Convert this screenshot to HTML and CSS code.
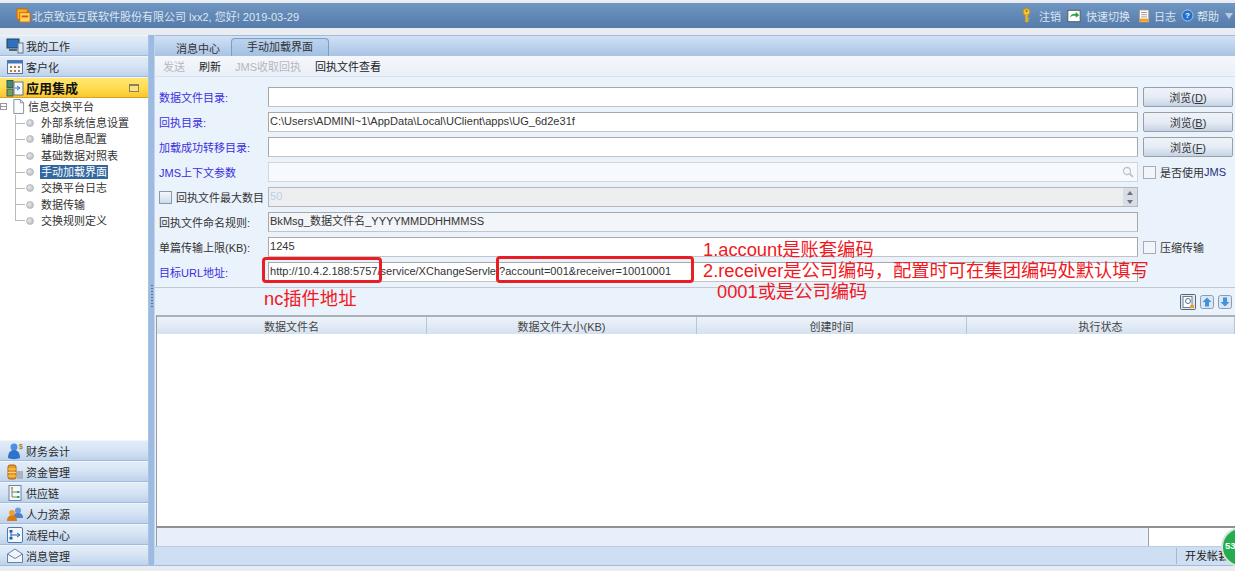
FILE: index.html
```html
<!DOCTYPE html>
<html lang="zh">
<head>
<meta charset="utf-8">
<title>手动加载界面</title>
<link rel="stylesheet" href="styles.css">
</head>
<body>
<div class="app">
  <header class="topbar">
    <div class="brand">
      <svg class="ico16" viewBox="0 0 16 16"><rect x="1" y="1" width="11" height="11" fill="#f6b01e" stroke="#c9660c"/><rect x="4" y="5" width="11" height="10" fill="#ffd65a" stroke="#d8640c"/><rect x="6" y="8" width="7" height="2" fill="#e2520c"/></svg>
      <span>北京致远互联软件股份有限公司 lxx2, 您好! 2019-03-29</span>
    </div>
    <nav class="toplinks">
      <svg class="ico-key" viewBox="0 0 10 16"><circle cx="5" cy="4" r="3.800" fill="#f7c531" stroke="#c98a10"/><circle cx="5" cy="3" r="1" fill="#8a6a10"/><rect x="3.700" y="7" width="2.600" height="8.500" fill="#f0b020"/><rect x="6" y="10.500" width="2" height="1.500" fill="#f0b020"/><rect x="6" y="13" width="1.500" height="1.500" fill="#f0b020"/></svg>
      <span class="tl-text tl-logout">注销</span>
      <svg class="ico-switch" viewBox="0 0 16 16"><rect x="1" y="1.500" width="14" height="13" fill="#fff" stroke="#555"/><path d="M3 10 C4 6 7 5 10 5.500 L10 3 L14 7 L10 10 L10 8 C7 7.500 5 8 3 10Z" fill="#2aa64a"/></svg>
      <span class="tl-text tl-switch">快速切换</span>
      <svg class="ico-log" viewBox="0 0 13 16"><rect x=".5" y="1" width="11" height="14" fill="#fff" stroke="#888"/><path d="M2.500 4h7M2.500 6.500h7M2.500 9h7" stroke="#a88" stroke-width="1"/><rect x="1" y="11" width="10" height="3.500" fill="#f0a020"/></svg>
      <span class="tl-text tl-log">日志</span>
      <svg class="ico-help" viewBox="0 0 16 16"><circle cx="8" cy="8" r="6.800" fill="#1f70c8" stroke="#bcd8f2"/><text x="8" y="11.500" class="qmark">?</text></svg>
      <span class="tl-text tl-help">帮助</span>
      <span class="caret"></span>
    </nav>
  </header>

  <div class="workspace">
    <aside class="sidebar">
      <div class="acc"><svg class="ico18" viewBox="0 0 18 18"><rect x="1" y="2" width="12" height="9" fill="#2f6fc4" stroke="#244"/><rect x="3" y="12" width="8" height="2" fill="#567"/><rect x="12" y="6" width="5" height="10" fill="#dde6f2" stroke="#678"/></svg><span>我的工作</span></div>
      <div class="acc"><svg class="ico18" viewBox="0 0 18 18"><rect x="1.500" y="2.500" width="15" height="13" fill="#f4f6fa" stroke="#5578a8"/><rect x="2" y="3" width="14" height="2.500" fill="#3d78c0"/><path d="M4 8h2v2H4zM8 8h2v2H8zM12 8h2v2h-2zM4 12h2v2H4zM8 12h2v2H8zM12 12h2v2h-2z" fill="#b5794a"/></svg><span>客户化</span></div>
      <div class="acc acc-on"><svg class="ico18" viewBox="0 0 18 18"><rect x="1" y="1.500" width="6" height="7" fill="#3d8f6a" stroke="#456"/><rect x="1" y="10" width="6" height="7" fill="#6aa65a" stroke="#456"/><rect x="8" y="3" width="9" height="13" fill="#f4f6fa" stroke="#678"/><path d="M9 9h4M11 7l3 2-3 2" stroke="#2f6fc4" fill="none"/></svg><span>应用集成</span><i class="collapse"></i></div>
      <div class="tree">
        <div class="tree-root"><span class="expander"></span><svg class="ico14" viewBox="0 0 14 16"><path d="M2 .5h7l3.500 3.500v11.500H2z" fill="#fbfcfe" stroke="#7d8ba0"/><path d="M9 .5V4h3.500" fill="none" stroke="#7d8ba0"/></svg><span>信息交换平台</span></div>
        <ul class="tree-list">
          <li><i class="dot"></i><span>外部系统信息设置</span></li>
          <li><i class="dot"></i><span>辅助信息配置</span></li>
          <li><i class="dot"></i><span>基础数据对照表</span></li>
          <li><i class="dot"></i><span class="sel">手动加载界面</span></li>
          <li><i class="dot"></i><span>交换平台日志</span></li>
          <li><i class="dot"></i><span>数据传输</span></li>
          <li><i class="dot"></i><span>交换规则定义</span></li>
        </ul>
      </div>
      <div class="acc-group">
        <div class="acc"><svg class="ico18" viewBox="0 0 18 18"><circle cx="8" cy="5" r="3.500" fill="#4d8fe0"/><path d="M2 16c0-6 3-8 6-8s6 2 6 8c-3 1.500-9 1.500-12 0z" fill="#2f72cc"/><text x="13" y="7" class="dollar">$</text></svg><span>财务会计</span></div>
        <div class="acc"><svg class="ico18" viewBox="0 0 18 18"><rect x="2" y="2" width="8" height="14" rx="2" fill="#e8992a" stroke="#a8640c"/><path d="M2 6h8M2 9.500h8M2 13h8" stroke="#fbd27a"/><rect x="11" y="8" width="6" height="8" fill="#a9b2bd"/></svg><span>资金管理</span></div>
        <div class="acc"><svg class="ico18" viewBox="0 0 18 18"><rect x="3" y="1.500" width="12" height="15" fill="#f4f7fb" stroke="#6a86a8"/><path d="M6 4v9h6M6 8h6" stroke="#6a8a5a" fill="none"/><rect x="5" y="3" width="2" height="2" fill="#d8a030"/><rect x="11" y="7" width="2.500" height="2" fill="#3a9a6a"/><rect x="11" y="12" width="2.500" height="2" fill="#3a9a6a"/></svg><span>供应链</span></div>
        <div class="acc"><svg class="ico18" viewBox="0 0 18 18"><circle cx="12" cy="5.500" r="3" fill="#6a9ad8"/><path d="M7 13c0-4 2-5 5-5s5 1 5 5z" fill="#4d80c8"/><circle cx="6" cy="8" r="3" fill="#f0a030"/><path d="M1 16c0-4 2-5.500 5-5.500S11 12 11 16z" fill="#d87a18"/></svg><span>人力资源</span></div>
        <div class="acc"><svg class="ico18" viewBox="0 0 18 18"><rect x="1.500" y="1.500" width="15" height="15" rx="1.500" fill="#f4f8fd" stroke="#4a78b0"/><path d="M5 5v7M5 9h8M11 7l3 2-3 2" stroke="#1f5fb0" fill="none"/><rect x="3.500" y="4" width="3" height="2.500" fill="#1f5fb0"/><rect x="3.500" y="11" width="3" height="2.500" fill="#1f5fb0"/></svg><span>流程中心</span></div>
        <div class="acc"><svg class="ico18" viewBox="0 0 18 18"><path d="M1.500 7 9 2l7.500 5v8.500h-15z" fill="#f2f6fb" stroke="#5f83ad"/><path d="M1.500 7 9 11.500 16.500 7" fill="none" stroke="#5f83ad"/></svg><span>消息管理</span></div>
      </div>
    </aside>

    <div class="splitter"><span class="grip"></span></div>

    <main class="content">
      <div class="tabs">
        <span class="tab">消息中心</span>
        <span class="tab tab-on">手动加载界面</span>
      </div>
      <div class="actions">
        <span class="off">发送</span>
        <span>刷新</span>
        <span class="off">JMS收取回执</span>
        <span>回执文件查看</span>
      </div>

      <form class="form">
        <label class="lbl blue">数据文件目录:</label>
        <div class="field"></div>
        <button type="button" class="btn">浏览(<u>D</u>)</button>

        <label class="lbl blue">回执目录:</label>
        <div class="field">C:\Users\ADMINI~1\AppData\Local\UClient\apps\UG_6d2e31f</div>
        <button type="button" class="btn">浏览(<u>B</u>)</button>

        <label class="lbl blue">加载成功转移目录:</label>
        <div class="field"></div>
        <button type="button" class="btn">浏览(<u>F</u>)</button>

        <label class="lbl blue">JMS上下文参数</label>
        <div class="field field-off"><svg class="search" viewBox="0 0 12 12"><circle cx="5" cy="5" r="3.500" fill="none" stroke="#bfc4ca" stroke-width="1.300"/><path d="M7.500 7.500 11 11" stroke="#bfc4ca" stroke-width="1.800"/></svg></div>
        <label class="chk"><i class="box"></i>是否使用<span class="navy">JMS</span></label>

        <label class="lbl"><i class="box box-fill"></i>回执文件最大数目</label>
        <div class="field field-gray">50<span class="spin"><b class="up"></b><b class="down"></b></span></div>
        <span></span>

        <label class="lbl">回执文件命名规则:</label>
        <div class="field field-soft">BkMsg_数据文件名_YYYYMMDDHHMMSS</div>
        <span></span>

        <label class="lbl">单篇传输上限(KB):</label>
        <div class="field">1245</div>
        <label class="chk"><i class="box"></i>压缩传输</label>

        <label class="lbl blue">目标URL地址:</label>
        <div class="field">http://10.4.2.188:5757/service/XChangeServlet?account=001&amp;receiver=10010001</div>
        <span></span>
      </form>

      <div class="gridbar">
        <svg class="tool tool-big" viewBox="0 0 16 16"><rect x=".5" y=".5" width="15" height="15" rx="1" fill="#dfe8f3" stroke="#56657a"/><rect x="3" y="2.500" width="9" height="11" fill="#fff" stroke="#6a7a90"/><circle cx="8" cy="7" r="2.500" fill="none" stroke="#55708f"/><rect x="10" y="11" width="4" height="3" fill="#e8a030"/></svg>
        <svg class="tool" viewBox="0 0 14 14"><rect x=".5" y=".5" width="13" height="13" rx="2" fill="#dbe7f4" stroke="#8a9cb2"/><path d="M7 2.500 11.500 7H9v4.500H5V7H2.500z" fill="#3f94dc"/></svg>
        <svg class="tool" viewBox="0 0 14 14"><rect x=".5" y=".5" width="13" height="13" rx="2" fill="#dbe7f4" stroke="#8a9cb2"/><path d="M7 11.500 2.500 7H5V2.500h4V7h2.500z" fill="#3f94dc"/></svg>
      </div>

      <div class="grid">
        <div class="grid-head">
          <span>数据文件名</span>
          <span>数据文件大小(KB)</span>
          <span>创建时间</span>
          <span>执行状态</span>
        </div>
        <div class="grid-body"></div>
      </div>

      <div class="status">
        <div class="status-main"></div>
        <div class="status-side"></div>
      </div>
      <div class="footer"><span class="acct">开发帐套</span></div>
    </main>
  </div>
</div>

<div class="redbox redbox-a"></div>
<div class="redbox redbox-b"></div>
<div class="note note-1">1.account是账套编码</div>
<div class="note note-2">2.receiver是公司编码，配置时可在集团编码处默认填写</div>
<div class="note note-3">0001或是公司编码</div>
<div class="note note-4">nc插件地址</div>
<div class="badge">53</div>
</body>
</html>
```
FILE: styles.css
```css
* { box-sizing: border-box; }
html, body { margin: 0; height: 100%; overflow: hidden; }
body {
  background: #e9edf2;
  font-family: "Liberation Sans", "Noto Sans CJK SC", sans-serif;
  font-size: 11px;
  color: #333;
}
.app { width: 1235px; height: 571px; padding-top: 3px; display: flex; flex-direction: column; }

.topbar {
  height: 25px;
  flex: none;
  display: flex;
  justify-content: space-between;
  align-items: center;
  padding: 0 2px 0 16px;
  color: #dde5f0;
  background: linear-gradient(#7096c2, #5f85b4 60%, #557ba9);
}
.brand { display: flex; align-items: center; gap: 1px; }
.toplinks { display: flex; align-items: center; }
.tl-logout { margin: 0 6px 0 8px; }
.tl-switch { margin: 0 8px 0 5px; }
.tl-log { margin: 0 5px 0 3px; }
.tl-help { margin: 0 6px 0 3px; }
.caret { width: 0; height: 0; margin-top: 1px; border: 4px solid transparent; border-top: 6px solid #b8cbe2; border-bottom: 0; }
.ico16 { width: 15px; height: 15px; flex: none; }
.ico-key { width: 9px; height: 15px; flex: none; }
.ico-switch { width: 14px; height: 14px; flex: none; }
.ico-log { width: 13px; height: 14px; flex: none; }
.ico-help { width: 13px; height: 13px; flex: none; }
.qmark { font: bold 10px "Liberation Sans", sans-serif; fill: #fff; text-anchor: middle; }
.dollar { font: bold 7px "Liberation Sans", sans-serif; fill: #b5781a; }

.workspace { flex: 1; min-height: 0; display: flex; margin-top: 7px; margin-bottom: 5px; }

.sidebar { width: 149px; flex: none; display: flex; flex-direction: column; background: #fff; border-right: 1px solid #a9c2e0; }
.acc {
  height: 21px;
  flex: none;
  display: flex;
  align-items: center;
  gap: 2px;
  padding-left: 6px;
  font-size: 11px;
  color: #2b2b2b;
  background: linear-gradient(#e3edf8, #d3e2f3 55%, #bdd2eb);
  border-top: 1px solid #f0f5fb;
  border-bottom: 1px solid #9fbcdf;
}
.ico18 { width: 18px; height: 18px; flex: none; }
.acc-on {
  position: relative;
  font-size: 13px;
  font-weight: 700;
  color: #111;
  background: linear-gradient(#ffe674, #ffdc4e 55%, #f9c62c);
  border-bottom-color: #d9a21f;
}
.collapse { position: absolute; left: 129px; top: 6px; width: 10px; height: 8px; border: 1px solid #8a8060; border-top-width: 2px; background: #fbe27a; }

.tree { flex: 1; font-size: 11px; color: #333; }
.tree-root { display: flex; align-items: center; height: 16px; }
.expander { width: 7px; height: 7px; border: 1px solid #999; margin-right: 5px; background: linear-gradient(#999, #999) center / 5px 1px no-repeat #fff; }
.ico14 { width: 13px; height: 15px; margin-right: 3px; flex: none; }
.tree-list { list-style: none; margin: 1px 0 0 15px; padding: 0; border-left: 1px solid #bbb; height: 106px; }
.tree-list li { height: 16.300px; display: flex; align-items: center; padding-left: 10px; background: linear-gradient(#bbb, #bbb) left center / 9px 1px no-repeat; }
.dot { width: 8px; height: 8px; border-radius: 50%; background: radial-gradient(circle at 40% 40%, #e8ebee, #a9aeb5); border: 1px solid #b9bec4; margin-right: 6px; flex: none; }
.tree-list span { padding: 0 1px; line-height: 14px; }
.tree-list .sel { background: #33689f; color: #fff; }
.acc-group { flex: none; }

.splitter { width: 5px; flex: none; background: #9dbbe2; display: flex; align-items: center; justify-content: center; }
.grip { width: 2px; height: 22px; margin-top: -10px; background: repeating-linear-gradient(#5a6f8c 0 1px, transparent 1px 3px); }

.content { flex: 1; min-width: 0; display: flex; flex-direction: column; background: #eaf2fb; border-left: 1px solid #c6d6ea; }
.tabs {
  height: 21px;
  flex: none;
  display: flex;
  align-items: flex-end;
  padding-left: 11px;
  gap: 1px;
  background: linear-gradient(#cfe1f6, #aac3e4);
  border-top: 1px solid #a5bcd8;
}
.tab { height: 18px; padding: 4px 10px 0; color: #333; line-height: 15px; }
.tab-on { padding: 1px 15px 0; border: 1px solid #7d9dc3; border-bottom: 0; border-radius: 4px 4px 0 0; background: linear-gradient(#bcd3ee, #a2c0e2); }

.actions {
  height: 21px;
  flex: none;
  display: flex;
  align-items: center;
  gap: 14px;
  padding-left: 8px;
  color: #222;
  background: linear-gradient(#f5f7fb, #eaeff8);
  border-bottom: 1px solid #d6e2f0;
}
.actions .off { color: #b5b8bd; }

.form {
  flex: none;
  display: grid;
  grid-template-columns: 109px 870px 95px;
  grid-auto-rows: 20px;
  row-gap: 5px;
  align-items: center;
  padding: 10px 0 0 4px;
  height: 210px;
}
.lbl { display: flex; align-items: center; white-space: nowrap; color: #333; }
.blue { color: #3a2fe0; }
.navy { color: #1f2f80; }
.field {
  height: 20px;
  position: relative;
  padding-left: 1px;
  line-height: 17px;
  font-size: 11.050px;
  white-space: nowrap;
  overflow: hidden;
  background: #fff;
  border: 1px solid #a8a8a8;
  border-bottom-color: #c4c4c4;
  color: #333;
}
.field-off { background: #f6f9fd; border-color: #d2d5d9; }
.field-gray { background: #eceef0; color: #bcd0ea; border-color: #b4b8bd; }
.field-soft { background: #f2f5f9; }
.search { position: absolute; right: 3px; top: 3px; width: 12px; height: 12px; }
.spin { position: absolute; right: 0; top: 0; width: 14px; height: 18px; display: flex; flex-direction: column; }
.spin b { flex: 1; display: flex; align-items: center; justify-content: center; background: #d9dee4; }
.spin b::after { content: ""; border: 3px solid transparent; }
.spin .up::after { border-bottom: 4px solid #6b7380; border-top: 0; }
.spin .down::after { border-top: 4px solid #6b7380; border-bottom: 0; }
.btn {
  height: 20px;
  width: 90px;
  margin-left: 5px;
  padding: 0;
  font: 11px "Liberation Sans", "Noto Sans CJK SC", sans-serif;
  color: #333;
  background: linear-gradient(#eff3f9, #e6ecf5 50%, #c6d3e6);
  border: 1px solid #9a9fa6;
  border-radius: 2px;
}
.chk { display: flex; align-items: center; margin-left: 5px; white-space: nowrap; }
.box { width: 13px; height: 13px; margin-right: 4px; flex: none; background: #f2f6fb; border: 1px solid #a9adb3; }
.box-fill { background: linear-gradient(#f4f7fb, #cddcee); border-color: #8a98a8; }

.gridbar {
  height: 28px;
  flex: none;
  display: flex;
  justify-content: flex-end;
  align-items: center;
  gap: 4px;
  padding-right: 3px;
  border-top: 1px solid #c3c9d1;
}
.tool { width: 14px; height: 14px; }
.tool-big { width: 16px; height: 16px; }

.grid { flex: 1; min-height: 0; display: flex; flex-direction: column; margin-left: 1px; background: #fff; border-left: 1px solid #9a9a9a; border-bottom: 2px solid #909090; }
.grid-head {
  height: 19px;
  flex: none;
  display: grid;
  grid-template-columns: 270px 270px 270px 1fr;
  background: linear-gradient(#eef3f9, #d5e2f1);
  border-top: 2px solid #a9b0ba;
  color: #444;
}
.grid-head span { display: flex; align-items: center; justify-content: center; border-right: 1px solid #b5c6dc; }
.grid-body { flex: 1; }

.status { height: 18px; flex: none; display: flex; margin-left: 1px; }
.status-main { flex: 1; background: #e7effa; border-left: 1px solid #9a9a9a; }
.status-side { width: 87px; margin-left: 2px; background: #fff; border-left: 1px solid #9a9a9a; }
.footer {
  height: 20px;
  flex: none;
  display: flex;
  justify-content: flex-end;
  align-items: center;
  background: #cfdff3;
  border-top: 1px solid #b9cce5;
  border-bottom: 1px solid #9fbadc;
  color: #222;
}
.acct { width: 59px; flex: none; padding-left: 8px; border-left: 1px solid #a9b6c6; white-space: nowrap; line-height: 16px; }

.redbox { position: absolute; border: 3px solid #ea1c24; border-radius: 4px; }
.redbox-a { left: 262px; top: 257px; width: 120px; height: 26px; }
.redbox-b { left: 496px; top: 256px; width: 198px; height: 27px; }
.note { position: absolute; color: #f0191f; font-size: 18.300px; line-height: 20px; white-space: nowrap; }
.note-1 { left: 703px; top: 240px; }
.note-2 { left: 703px; top: 261px; }
.note-3 { left: 717px; top: 282px; }
.note-4 { left: 264px; top: 289px; }
.badge {
  position: absolute;
  left: 1221px;
  top: 527px;
  width: 40px;
  height: 40px;
  padding: 11px 0 0 2px;
  border-radius: 50%;
  background: #23ad4c;
  border: 2px solid #d7e3d9;
  color: #fff;
  font-weight: 700;
  font-size: 9.500px;
}
```
